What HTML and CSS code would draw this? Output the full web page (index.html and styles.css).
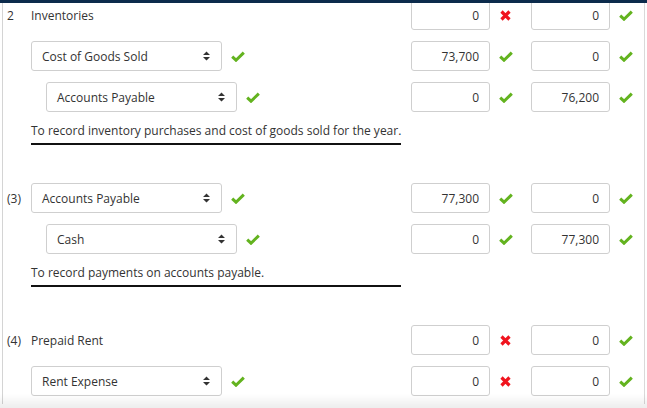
FILE: index.html
```html
<!DOCTYPE html>
<html>
<head>
<meta charset="utf-8">
<link rel="stylesheet" href="styles.css">
</head>
<body>
<div class="topbar"></div>
<div class="sheet">
  <section class="entry">
    <div class="line">
      <div class="num">2</div>
      <div class="acct"><span class="acct-text">Inventories</span></div>
      <div class="amts">
        <div class="amt"><div class="field">0</div><span class="mark"><svg class="bad" viewBox="0 0 11 11"><path d="M1.5 1.5 L9.5 9.5 M9.5 1.5 L1.5 9.5"/></svg></span></div>
        <div class="amt"><div class="field">0</div><span class="mark"><svg class="ok" viewBox="0 0 14 11"><path d="M1.2 5.6 L5 9.2 L12.8 1.6"/></svg></span></div>
      </div>
    </div>
    <div class="line">
      <div class="num"></div>
      <div class="acct">
        <div class="select"><span>Cost of Goods Sold</span><svg class="arrows" viewBox="0 0 7 10"><path d="M0 4 L3.5 0.5 L7 4 Z M0 6 L3.5 9.5 L7 6 Z"/></svg></div>
        <svg class="ok sel-mark" viewBox="0 0 14 11"><path d="M1.2 5.6 L5 9.2 L12.8 1.6"/></svg>
      </div>
      <div class="amts">
        <div class="amt"><div class="field">73,700</div><span class="mark"><svg class="ok" viewBox="0 0 14 11"><path d="M1.2 5.6 L5 9.2 L12.8 1.6"/></svg></span></div>
        <div class="amt"><div class="field">0</div><span class="mark"><svg class="ok" viewBox="0 0 14 11"><path d="M1.2 5.6 L5 9.2 L12.8 1.6"/></svg></span></div>
      </div>
    </div>
    <div class="line">
      <div class="num"></div>
      <div class="acct credit">
        <div class="select"><span>Accounts Payable</span><svg class="arrows" viewBox="0 0 7 10"><path d="M0 4 L3.5 0.5 L7 4 Z M0 6 L3.5 9.5 L7 6 Z"/></svg></div>
        <svg class="ok sel-mark" viewBox="0 0 14 11"><path d="M1.2 5.6 L5 9.2 L12.8 1.6"/></svg>
      </div>
      <div class="amts">
        <div class="amt"><div class="field">0</div><span class="mark"><svg class="ok" viewBox="0 0 14 11"><path d="M1.2 5.6 L5 9.2 L12.8 1.6"/></svg></span></div>
        <div class="amt"><div class="field">76,200</div><span class="mark"><svg class="ok" viewBox="0 0 14 11"><path d="M1.2 5.6 L5 9.2 L12.8 1.6"/></svg></span></div>
      </div>
    </div>
    <p class="desc">To record inventory purchases and cost of goods sold for the year.</p>
  </section>

  <section class="entry">
    <div class="line">
      <div class="num">(3)</div>
      <div class="acct">
        <div class="select"><span>Accounts Payable</span><svg class="arrows" viewBox="0 0 7 10"><path d="M0 4 L3.5 0.5 L7 4 Z M0 6 L3.5 9.5 L7 6 Z"/></svg></div>
        <svg class="ok sel-mark" viewBox="0 0 14 11"><path d="M1.2 5.6 L5 9.2 L12.8 1.6"/></svg>
      </div>
      <div class="amts">
        <div class="amt"><div class="field">77,300</div><span class="mark"><svg class="ok" viewBox="0 0 14 11"><path d="M1.2 5.6 L5 9.2 L12.8 1.6"/></svg></span></div>
        <div class="amt"><div class="field">0</div><span class="mark"><svg class="ok" viewBox="0 0 14 11"><path d="M1.2 5.6 L5 9.2 L12.8 1.6"/></svg></span></div>
      </div>
    </div>
    <div class="line">
      <div class="num"></div>
      <div class="acct credit">
        <div class="select"><span>Cash</span><svg class="arrows" viewBox="0 0 7 10"><path d="M0 4 L3.5 0.5 L7 4 Z M0 6 L3.5 9.5 L7 6 Z"/></svg></div>
        <svg class="ok sel-mark" viewBox="0 0 14 11"><path d="M1.2 5.6 L5 9.2 L12.8 1.6"/></svg>
      </div>
      <div class="amts">
        <div class="amt"><div class="field">0</div><span class="mark"><svg class="ok" viewBox="0 0 14 11"><path d="M1.2 5.6 L5 9.2 L12.8 1.6"/></svg></span></div>
        <div class="amt"><div class="field">77,300</div><span class="mark"><svg class="ok" viewBox="0 0 14 11"><path d="M1.2 5.6 L5 9.2 L12.8 1.6"/></svg></span></div>
      </div>
    </div>
    <p class="desc">To record payments on accounts payable.</p>
  </section>

  <section class="entry">
    <div class="line">
      <div class="num">(4)</div>
      <div class="acct"><span class="acct-text">Prepaid Rent</span></div>
      <div class="amts">
        <div class="amt"><div class="field">0</div><span class="mark"><svg class="bad" viewBox="0 0 11 11"><path d="M1.5 1.5 L9.5 9.5 M9.5 1.5 L1.5 9.5"/></svg></span></div>
        <div class="amt"><div class="field">0</div><span class="mark"><svg class="ok" viewBox="0 0 14 11"><path d="M1.2 5.6 L5 9.2 L12.8 1.6"/></svg></span></div>
      </div>
    </div>
    <div class="line">
      <div class="num"></div>
      <div class="acct">
        <div class="select"><span>Rent Expense</span><svg class="arrows" viewBox="0 0 7 10"><path d="M0 4 L3.5 0.5 L7 4 Z M0 6 L3.5 9.5 L7 6 Z"/></svg></div>
        <svg class="ok sel-mark" viewBox="0 0 14 11"><path d="M1.2 5.6 L5 9.2 L12.8 1.6"/></svg>
      </div>
      <div class="amts">
        <div class="amt"><div class="field">0</div><span class="mark"><svg class="bad" viewBox="0 0 11 11"><path d="M1.5 1.5 L9.5 9.5 M9.5 1.5 L1.5 9.5"/></svg></span></div>
        <div class="amt"><div class="field">0</div><span class="mark"><svg class="ok" viewBox="0 0 14 11"><path d="M1.2 5.6 L5 9.2 L12.8 1.6"/></svg></span></div>
      </div>
    </div>
  </section>
</div>
<div class="fade"></div>
</body>
</html>
```

FILE: styles.css
```css
html, body {
  margin: 0;
  padding: 0;
  background: #fff;
  overflow: hidden;
  height: 408px;
}
body {
  font-family: "Open Sans", "DejaVu Sans", sans-serif;
  font-size: 12px;
  color: #333;
}
.topbar {
  position: fixed;
  top: 0;
  left: 0;
  right: 0;
  height: 3px;
  background: #0c2b4c;
  z-index: 5;
}
.sheet {
  margin-left: 2px;
  border-left: 1px solid #d4d4d4;
  border-right: 1px solid #d9d9d9;
  padding: 0 3px 0 4px;
  box-sizing: border-box;
  width: 643px;
  height: 404px;
}
.entry + .entry {
  margin-top: 38px;
}
.line {
  display: flex;
  align-items: center;
  height: 30px;
}
.line + .line {
  margin-top: 11px;
}
.num {
  width: 24px;
  flex: none;
}
.acct {
  flex: 1;
  display: flex;
  align-items: center;
}
.acct.credit {
  padding-left: 15px;
}
.select {
  width: 191px;
  height: 30px;
  box-sizing: border-box;
  border: 1px solid #cfcfcf;
  border-radius: 3px;
  padding: 0 11px 0 10px;
  display: flex;
  align-items: center;
  justify-content: space-between;
  background: #fff;
}
.arrows {
  width: 7px;
  height: 10px;
  fill: #333;
}
.sel-mark {
  margin-left: 9px;
}
.amts {
  display: flex;
  gap: 10px;
  flex: none;
}
.amt {
  display: flex;
  align-items: center;
}
.field {
  width: 79px;
  height: 30px;
  box-sizing: border-box;
  border: 1px solid #cfcfcf;
  border-radius: 3px;
  padding: 0 10px;
  display: flex;
  align-items: center;
  justify-content: flex-end;
}
.mark {
  width: 31px;
  display: flex;
  justify-content: center;
  align-items: center;
}
svg.ok {
  width: 14px;
  height: 11px;
  fill: none;
  stroke: #63b31f;
  stroke-width: 3;
}
svg.bad {
  width: 11px;
  height: 11px;
  fill: none;
  stroke: #f0141e;
  stroke-width: 3.2;
}
.desc {
  margin: 8px 0 0 24px;
  width: 370px;
  line-height: 21px;
  padding-bottom: 2px;
  border-bottom: 2px solid #111;
  white-space: nowrap;
}
.fade {
  position: fixed;
  left: 0;
  right: 0;
  bottom: 0;
  height: 14px;
  background: linear-gradient(to bottom, rgba(0,0,0,0), rgba(0,0,0,0.07));
  z-index: 4;
}
```
